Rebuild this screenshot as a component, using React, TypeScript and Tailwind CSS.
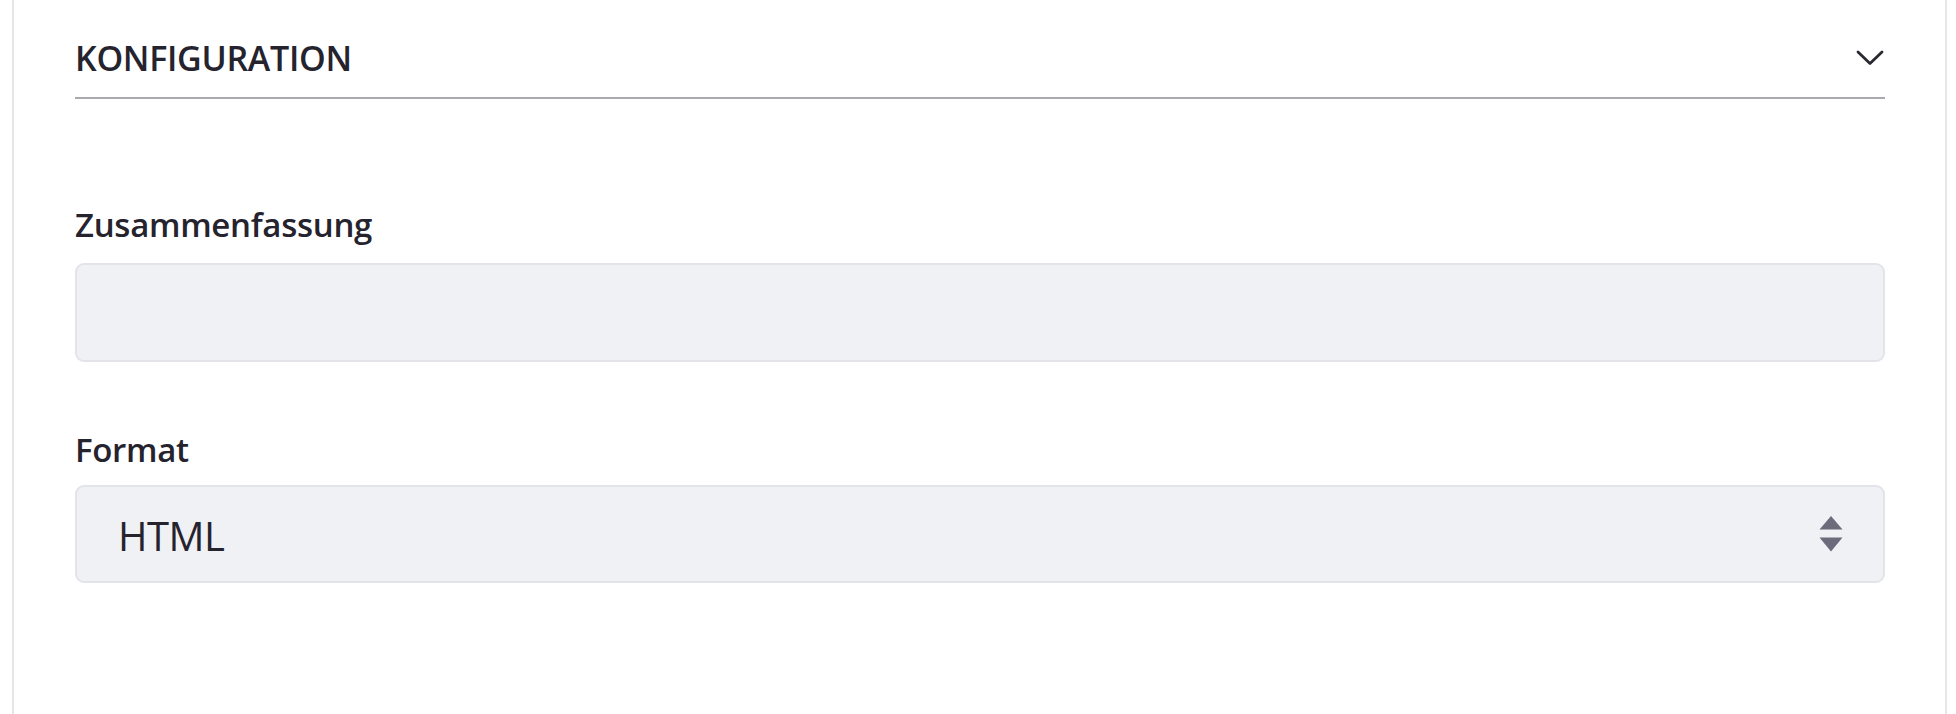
import React from "react";

function Chevron() {
  return (
    <svg width="28" height="16" viewBox="0 0 28 16" fill="none" className="block">
      <path d="M2 2 L14 13.5 L26 2" stroke="#2a2930" strokeWidth="2.8" strokeLinecap="round" strokeLinejoin="round" />
    </svg>
  );
}

function UpDown() {
  return (
    <svg width="24" height="36" viewBox="0 0 24 36" className="block">
      <path d="M12 0 L23.5 13.5 L0.5 13.5 Z" fill="#6c6b7b" />
      <path d="M12 35.5 L23.5 21.5 L0.5 21.5 Z" fill="#6c6b7b" />
    </svg>
  );
}

export default function App() {
  return (
    <div className="min-h-screen w-full bg-white" style={{ fontFamily: '"Open Sans", "Noto Sans", sans-serif' }}>
      <div className="ml-[12px] mr-[9px] min-h-[714px] border-x-2 border-[#e6e6e8] bg-white pl-[61px] pr-[60px]">
        <div className="flex items-start justify-between border-b-2 border-[#a9a9ae] pt-[33px] pb-[13px]">
          <h2 className="text-[34px] font-semibold uppercase leading-[51px] tracking-[-0.3px] text-[#25232e]">Konfiguration</h2>
          <div className="mt-[17px] mr-[1px]">
            <Chevron />
          </div>
        </div>

        <div className="pt-[100px]">
          <label className="mb-[13px] block text-[33px] font-semibold leading-[51px] tracking-[-0.3px] text-[#25232e]">Zusammenfassung</label>
          <div className="h-[99px] w-full rounded-[9px] border-2 border-[#e3e4e9] bg-[#f0f1f5]" />
        </div>

        <div className="pt-[62px]">
          <label className="mb-[10px] block text-[33px] font-semibold leading-[51px] tracking-[-0.3px] text-[#25232e]">Format</label>
          <div className="flex h-[98px] w-full items-center justify-between rounded-[9px] border-2 border-[#e3e4e9] bg-[#f0f1f5] pl-[41px] pr-[40px]">
            <span className="pt-[4px] text-[40px] font-normal leading-none tracking-[-0.5px] text-[#25232e]">HTML</span>
            <UpDown />
          </div>
        </div>
      </div>
    </div>
  );
}
